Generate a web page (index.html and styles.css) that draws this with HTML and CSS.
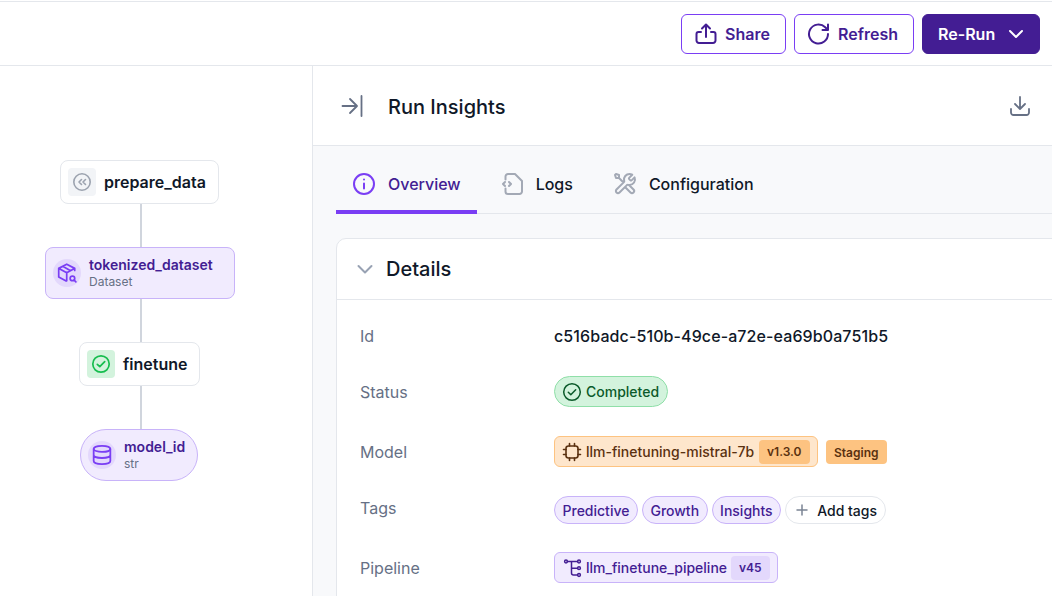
FILE: index.html
```html
<!DOCTYPE html>
<html>

<head>
	<meta charset="utf-8">
	<title>Run Insights</title>
	<link rel="stylesheet" href="styles.css">
</head>

<body>
	<header class="topbar">
		<button class="btn btn-outline btn-share">
			<svg width="24" height="24" viewBox="0 0 24 24" fill="none" stroke="currentColor" stroke-width="2" stroke-linecap="round" stroke-linejoin="round"><path d="M8 6.500l4-4 4 4M12 3v12M7 10H4.500a2 2 0 0 0-2 2v6.500a2.500 2.500 0 0 0 2.500 2.500h14a2.500 2.500 0 0 0 2.500-2.500V12a2 2 0 0 0-2-2H17"/></svg>
			Share
		</button>
		<button class="btn btn-outline btn-refresh">
			<svg width="24" height="24" viewBox="0 0 24 24" fill="none" stroke="currentColor" stroke-width="2" stroke-linecap="round" stroke-linejoin="round"><path d="M21 12a9.500 9.500 0 1 1-2.800-6.700L21 8M21 2.500V8h-5.500"/></svg>
			Refresh
		</button>
		<button class="btn btn-solid">
			Re-Run
			<svg width="16" height="16" viewBox="0 0 16 16" fill="none" stroke="currentColor" stroke-width="2" stroke-linecap="round" stroke-linejoin="round"><path d="M2 5l6 6 6-6"/></svg>
		</button>
	</header>

	<div class="main">
		<section class="dag">
			<div class="edge edge-1"></div>
			<div class="edge edge-2"></div>
			<div class="edge edge-3"></div>

			<div class="node step node-prepare">
				<span class="step-icon step-icon-gray">
					<svg width="20" height="20" viewBox="0 0 20 20" fill="none" stroke="#9ca3af" stroke-width="1.600" stroke-linecap="round" stroke-linejoin="round"><circle cx="10" cy="10" r="8.200"/><path d="M9.500 7.500L7 10l2.500 2.500M13.500 7.500L11 10l2.500 2.500"/></svg>
				</span>
				prepare_data
			</div>

			<div class="node artifact node-dataset">
				<span class="artifact-icon">
					<svg width="20" height="20" viewBox="1.500 1.500 17.500 17.500" fill="none" stroke="#7a3ef4" stroke-width="1.500" stroke-linecap="round" stroke-linejoin="round"><path d="M17 8V6.200L10 2.500 3 6.200v7.600l6.500 3.500M3.200 6.300L10 10l6.800-3.700M10 10v7M6.500 4.400l6.900 3.800"/><circle cx="15" cy="15" r="2"/><path d="M16.500 16.500L18 18"/></svg>
				</span>
				<span class="artifact-text">
					<span class="artifact-name">tokenized_dataset</span>
					<span class="artifact-type">Dataset</span>
				</span>
			</div>

			<div class="node step node-finetune">
				<span class="step-icon step-icon-green">
					<svg width="20" height="20" viewBox="0 0 20 20" fill="none" stroke="#16bd4e" stroke-width="1.700" stroke-linecap="round" stroke-linejoin="round"><circle cx="10" cy="10" r="8.200"/><path d="M6.300 10.300l2.500 2.400 4.900-5"/></svg>
				</span>
				finetune
			</div>

			<div class="node artifact node-model">
				<span class="artifact-icon">
					<svg width="20" height="20" viewBox="1 1 18 18" fill="none" stroke="#7a3ef4" stroke-width="1.600" stroke-linecap="round" stroke-linejoin="round"><ellipse cx="10" cy="4.500" rx="7.500" ry="2.700"/><path d="M2.500 4.500v11c0 1.500 3.400 2.700 7.500 2.700s7.500-1.200 7.500-2.700v-11M2.500 10c0 1.500 3.400 2.700 7.500 2.700s7.500-1.200 7.500-2.700"/></svg>
				</span>
				<span class="artifact-text">
					<span class="artifact-name">model_id</span>
					<span class="artifact-type">str</span>
				</span>
			</div>
		</section>

		<section class="insights">
			<div class="insights-head">
				<svg class="collapse-icon" width="24" height="24" viewBox="0 0 24 24" fill="none" stroke="#667085" stroke-width="1.800" stroke-linecap="round" stroke-linejoin="round"><path d="M1.500 12h14M9 5l7 7-7 7M20.500 2v20"/></svg>
				<h2>Run Insights</h2>
				<svg class="download-icon" width="24" height="24" viewBox="0 0 24 24" fill="none" stroke="#667085" stroke-width="1.800" stroke-linecap="round" stroke-linejoin="round"><path d="M12 3v12M7 10l5 5 5-5M3 15v3.500A2.500 2.500 0 0 0 5.500 21h13a2.500 2.500 0 0 0 2.500-2.500V15"/></svg>
			</div>

			<div class="insights-body">
				<nav class="tabs">
					<a class="tab tab-active">
						<svg width="24" height="24" viewBox="0 0 24 24" fill="none" stroke="#7a3ef4" stroke-width="2" stroke-linecap="round" stroke-linejoin="round"><circle cx="12" cy="12" r="10"/><path d="M12 11.500v5M12 7.500h.01"/></svg>
						Overview
					</a>
					<a class="tab tab-logs">
						<svg width="24" height="24" viewBox="0 0 24 24" fill="none" stroke="#a3a9b5" stroke-width="2" stroke-linecap="round" stroke-linejoin="round"><path d="M4.500 7.500v-3A2.500 2.500 0 0 1 7 2h7l7 7v10.500a2.500 2.500 0 0 1-2.500 2.500H7a2.500 2.500 0 0 1-2.500-2.500v-3M4 10l-2 2 2 2M8 10l2 2-2 2"/></svg>
						Logs
					</a>
					<a class="tab">
						<svg width="24" height="24" viewBox="0 0 24 24" fill="none" stroke="#a3a9b5" stroke-width="2" stroke-linecap="round" stroke-linejoin="round"><path d="M6 6l4.500 4.500M6 6H3L2 3l1-1 3 1v3zM19.260 2.740l-2.630 2.630c-.4.400-.59.590-.67.820a1 1 0 0 0 0 .620c.08.230.27.420.67.820l.24.240c.4.400.59.590.82.670a1 1 0 0 0 .62 0c.23-.08.420-.27.820-.67l2.460-2.460A5.500 5.500 0 0 1 16.500 13c-.37 0-.72-.04-1.070-.10-.49-.1-.73-.15-.88-.13-.16.010-.23.040-.37.110-.13.070-.26.200-.52.460L6.500 20.500a2.120 2.120 0 0 1-3-3l7.160-7.160c.26-.26.390-.39.460-.52.07-.14.100-.21.110-.37.010-.15-.03-.39-.13-.88A5.500 5.500 0 0 1 16.500 2c1 0 1.900.3 2.760.74zM12 15l5.500 5.500a2.120 2.120 0 0 0 3-3L16 13"/></svg>
						Configuration
					</a>
				</nav>

				<div class="card">
					<div class="card-head">
						<svg width="20" height="20" viewBox="0 0 20 20" fill="none" stroke="#98a2b3" stroke-width="2" stroke-linecap="round" stroke-linejoin="round"><path d="M3.500 7l6.500 6.500L16.500 7"/></svg>
						<h3>Details</h3>
					</div>
					<div class="rows">
						<div class="row row-id">
							<span class="label">Id</span>
							<span class="value">c516badc-510b-49ce-a72e-ea69b0a751b5</span>
						</div>
						<div class="row row-status">
							<span class="label">Status</span>
							<span class="pill pill-green">
								<svg width="20" height="20" viewBox="0 0 20 20" fill="none" stroke="#0b5a2a" stroke-width="1.500" stroke-linecap="round" stroke-linejoin="round"><circle cx="10" cy="10" r="8.300"/><path d="M6.300 10.300l2.500 2.400 4.900-5"/></svg>
								Completed
							</span>
						</div>
						<div class="row row-model">
							<span class="label">Model</span>
							<span class="chip chip-orange">
								<svg width="20" height="20" viewBox="0 0 20 20" fill="none" stroke="#5a3110" stroke-width="1.600" stroke-linecap="round" stroke-linejoin="round"><rect x="4" y="4" width="12" height="12" rx="2.500"/><path d="M7.500 1.500V4M12.500 1.500V4M7.500 16v2.500M12.500 16v2.500M1.500 7.500H4M1.500 12.500H4M16 7.500h2.500M16 12.500h2.500"/></svg>
								llm-finetuning-mistral-7b
								<span class="version version-orange">v1.3.0</span>
							</span>
							<span class="stage">Staging</span>
						</div>
						<div class="row row-tags">
							<span class="label">Tags</span>
							<span class="tags">
								<span class="tag">Predictive</span>
								<span class="tag">Growth</span>
								<span class="tag">Insights</span>
								<span class="tag-add">
									<svg width="16" height="16" viewBox="0 0 16 16" fill="none" stroke="#7b8494" stroke-width="1.500" stroke-linecap="round"><path d="M8 3v10M3 8h10"/></svg>
									Add tags
								</span>
							</span>
						</div>
						<div class="row row-pipeline">
							<span class="label">Pipeline</span>
							<span class="chip chip-purple">
								<svg width="20" height="20" viewBox="0 0 20 20" fill="none" stroke="#431d93" stroke-width="1.500" stroke-linecap="round" stroke-linejoin="round"><circle cx="4" cy="3.500" r="1.400"/><circle cx="17" cy="3.500" r="1.400"/><circle cx="17" cy="10.200" r="1.400"/><circle cx="17" cy="17" r="1.400"/><path d="M5.400 3.500h10.200M9.500 3.500V15a2 2 0 0 0 2 2h4.100M9.500 10.200h6.100"/></svg>
								llm_finetune_pipeline
								<span class="version version-purple">v45</span>
							</span>
						</div>
					</div>
				</div>
			</div>
		</section>
	</div>
</body>

</html>
```

FILE: styles.css
```css
html, body {
	margin: 0;
	padding: 0;
	height: 100%;
	overflow: hidden;
}

body {
	font-family: Inter, "Liberation Sans", sans-serif;
	color: #101828;
	background: #fff;
}

/* Top bar with the run actions */

.topbar {
	height: 63px;
	margin-top: 1px;
	border-top: 1px solid #e4e7ec;
	border-bottom: 1px solid #e4e7ec;
	display: flex;
	justify-content: flex-end;
	align-items: flex-start;
	gap: 8px;
	padding-right: 12px;
}

.btn {
	height: 40px;
	margin-top: 12px;
	box-sizing: border-box;
	display: flex;
	align-items: center;
	border-radius: 6px;
	font-family: inherit;
	font-size: 16px;
	font-weight: 600;
	padding: 0;
}

.btn-outline {
	background: #fff;
	border: 1px solid #7a3ef4;
	color: #431d93;
	gap: 7px;
}

.btn-share {
	width: 105px;
	padding-left: 12px;
}

.btn-refresh {
	width: 120px;
	padding-left: 12px;
}

.btn-solid {
	width: 118px;
	background: #431d93;
	border: 1px solid #431d93;
	color: #fff;
	padding-left: 15px;
	gap: 13px;
}

/* Two panels */

.main {
	display: flex;
	height: 531px;
	overflow: hidden;
}

.dag {
	position: relative;
	width: 312px;
	flex: none;
	border-right: 1px solid #e4e7ec;
}

.insights {
	flex: 1;
	min-width: 0;
	display: flex;
	flex-direction: column;
	overflow: hidden;
}

/* DAG canvas: nodes are placed on a free canvas, top is relative to .dag */

.edge {
	position: absolute;
	left: 140px;
	width: 2px;
	background: #d0d5dd;
}

.edge-1 {
	top: 138px;
	height: 43px;
}

.edge-2 {
	top: 233px;
	height: 43px;
}

.edge-3 {
	top: 320px;
	height: 43px;
}

.node {
	position: absolute;
	box-sizing: border-box;
	display: flex;
	align-items: center;
}

.step {
	height: 44px;
	background: #fff;
	border: 1px solid #e4e7ec;
	border-radius: 8px;
	font-size: 16px;
	font-weight: 600;
	padding-left: 7px;
	gap: 8px;
}

.step-icon {
	width: 28px;
	height: 28px;
	border-radius: 4px;
	display: flex;
	align-items: center;
	justify-content: center;
}

.step-icon-gray {
	background: #f2f4f7;
}

.step-icon-green {
	background: #d3f3dd;
}

.artifact {
	height: 52px;
	background: #f1ebfe;
	border: 1px solid #c8b3f9;
	padding-left: 7px;
	gap: 8px;
}

.artifact-icon {
	width: 28px;
	height: 28px;
	border-radius: 50%;
	background: #e3d8fc;
	display: flex;
	align-items: center;
	justify-content: center;
}

.artifact-text {
	display: flex;
	flex-direction: column;
}

.artifact-name {
	font-size: 14px;
	line-height: 17px;
	font-weight: 600;
	color: #431d93;
}

.artifact-type {
	font-size: 12px;
	line-height: 17px;
	color: #667085;
}

.node-prepare {
	left: 60px;
	top: 94px;
	width: 159px;
}

.node-dataset {
	left: 45px;
	top: 181px;
	width: 190px;
	border-radius: 8px;
}

.node-finetune {
	left: 79px;
	top: 276px;
	width: 121px;
}

.node-model {
	left: 80px;
	top: 363px;
	width: 118px;
	border-radius: 26px;
}

/* Insights panel */

.insights-head {
	height: 79px;
	flex: none;
	display: flex;
	align-items: center;
	border-bottom: 1px solid #e4e7ec;
	padding-left: 28px;
	padding-right: 20px;
}

.insights-head h2 {
	font-size: 20px;
	font-weight: 500;
	margin: 2px 0 0 23px;
	flex: 1;
}

.insights-body {
	flex: 1;
	background: #f8f9fb;
	padding: 0 0 0 23px;
}

.tabs {
	height: 68px;
	box-sizing: border-box;
	display: flex;
	border-bottom: 1px solid #e4e7ec;
}

.tab {
	height: 68px;
	box-sizing: border-box;
	display: flex;
	align-items: center;
	gap: 12px;
	padding: 12px 16px 0 16px;
	border-bottom: 4px solid transparent;
	font-size: 16px;
	font-weight: 500;
	margin-right: 8px;
}

.tab-active {
	color: #431d93;
	border-bottom-color: #7a3ef4;
}

.tab-logs {
	gap: 11px;
}

.card {
	width: 760px;
	margin-top: 24px;
	padding-bottom: 40px;
	background: #fff;
	border: 1px solid #e4e7ec;
	border-radius: 10px 0 0 10px;
}

.card-head {
	height: 60px;
	display: flex;
	align-items: center;
	gap: 11px;
	padding-left: 18px;
	border-bottom: 1px solid #e4e7ec;
}

.card-head h3 {
	font-size: 20px;
	font-weight: 500;
	margin: 0;
}

.rows {
	padding-left: 23px;
}

.row {
	display: flex;
	align-items: center;
}

.row-id {
	margin-top: 20px;
	height: 32px;
}

.row-status {
	margin-top: 24px;
	height: 32px;
}

.row-model {
	margin-top: 28px;
	height: 32px;
	gap: 8px;
}

.row-tags {
	margin-top: 24px;
	height: 32px;
}

.row-pipeline {
	margin-top: 28px;
	height: 32px;
}

.label {
	width: 194px;
	flex: none;
	font-size: 16px;
	color: #667085;
}

.row-model .label {
	margin-right: -8px;
}

.value {
	font-size: 16px;
	font-weight: 500;
	letter-spacing: 0.1px;
	color: #101828;
}

.pill,
.chip {
	box-sizing: border-box;
	height: 31px;
	align-self: flex-start;
	display: inline-flex;
	align-items: center;
	font-size: 14px;
	font-weight: 500;
	gap: 4px;
}

.pill {
	padding: 0 8px 0 7px;
	border-radius: 16px;
}

.pill-green {
	background: #d3f3dd;
	border: 1px solid #8fdfa8;
	color: #0b5a2a;
}

.chip {
	padding-left: 7px;
	padding-right: 7px;
	border-radius: 6px;
}

.chip-orange {
	background: #fee6cc;
	border: 1px solid #fdc381;
	color: #5a3110;
}

.chip-purple {
	background: #f1ebfe;
	border: 1px solid #c8b3f9;
	color: #431d93;
}

.version {
	height: 24px;
	display: inline-flex;
	align-items: center;
	border-radius: 4px;
	font-size: 12px;
	font-weight: 600;
	padding: 0 8px;
}

.version-orange {
	background: #fdc381;
	margin-left: 1px;
}

.version-purple {
	background: #e3d8fc;
}

.stage {
	height: 24px;
	display: inline-flex;
	align-items: center;
	border-radius: 4px;
	background: #fdc381;
	color: #5a3110;
	font-size: 12px;
	font-weight: 600;
	padding: 0 8.500px;
}

.tags {
	display: flex;
	align-items: center;
	align-self: flex-start;
	margin-top: 4px;
	gap: 4px;
}

.tag,
.tag-add {
	height: 28px;
	box-sizing: border-box;
	display: inline-flex;
	align-items: center;
	border-radius: 14px;
	font-size: 14px;
	font-weight: 500;
}

.tag {
	padding: 0 7.500px;
	background: #f1ebfe;
	border: 1px solid #c8b3f9;
	color: #431d93;
}

.tag-add {
	padding: 0 8px;
	gap: 7px;
	background: #fff;
	border: 1px solid #e4e7ec;
}
```
